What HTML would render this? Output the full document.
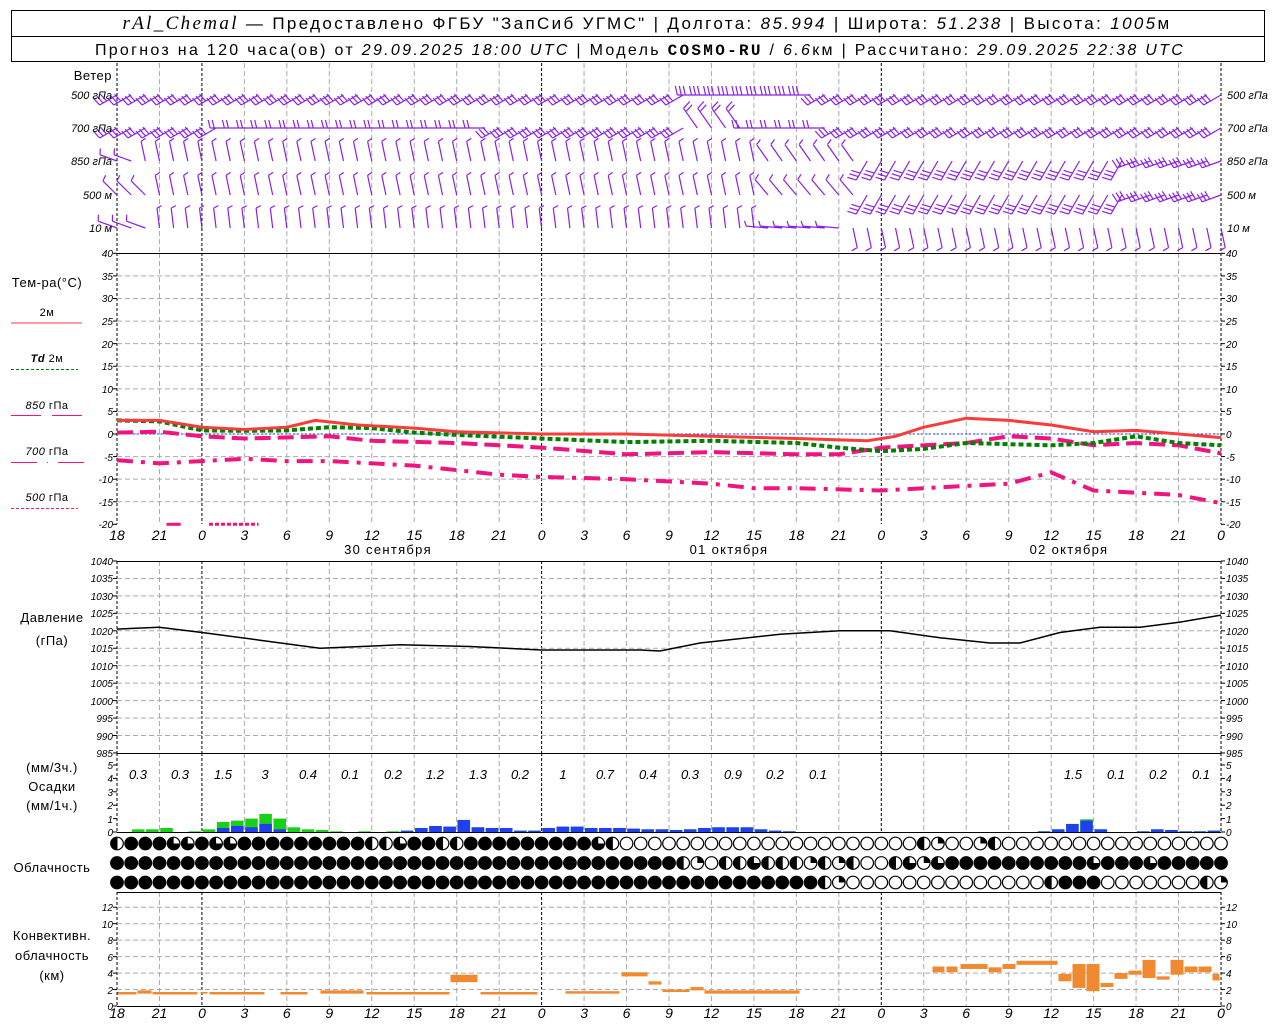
<!DOCTYPE html>
<html><head><meta charset="utf-8"><style>
html,body{margin:0;padding:0;background:#fff;width:1280px;height:1024px;overflow:hidden}
svg{display:block;font-family:"Liberation Sans","DejaVu Sans",sans-serif}
.t{font-size:13px;fill:#000;letter-spacing:0.5px}
.n{font-size:10px;font-style:italic;fill:#000}
.h{font-size:14px;font-style:italic;fill:#000;text-anchor:middle}
.v{font-size:13px;font-style:italic;fill:#000;text-anchor:middle}
.L{text-anchor:end}.M{text-anchor:middle}
.lg{font-size:11px}
</style></head><body>
<svg id="s" width="1280" height="1024" viewBox="0 0 1280 1024" xmlns="http://www.w3.org/2000/svg">
<rect x="11.5" y="10.5" width="1253" height="51" fill="none" stroke="#000"/>
<line x1="11" y1="36.5" x2="1265" y2="36.5" stroke="#000"/>
<text x="647" y="29" class="M" style="font-size:17px;letter-spacing:2.35px"><tspan font-family="Liberation Serif" font-style="italic" font-size="19">rAl_Chemal</tspan> — Предоставлено ФГБУ "ЗапСиб УГМС" | Долгота: <tspan font-style="italic">85.994</tspan> | Широта: <tspan font-style="italic">51.238</tspan> | Высота: <tspan font-style="italic">1005</tspan>м</text>
<text x="640" y="55" class="M" style="font-size:16px;letter-spacing:2.3px">Прогноз на 120 часа(ов) от <tspan font-style="italic">29.09.2025 18:00 UTC</tspan>  | Модель <tspan font-family="Liberation Mono" font-weight="bold">COSMO-RU</tspan> / <tspan font-style="italic">6.6</tspan>км | Рассчитано: <tspan font-style="italic">29.09.2025 22:38 UTC</tspan></text>
<g id="grid"></g>
<g id="gfx"></g>
<text x="112" y="80" class="t L">Ветер</text>
<text x="112" y="99" class="n L" style="font-size:11px">500 гПа</text>
<text x="112" y="132" class="n L" style="font-size:11px">700 гПа</text>
<text x="112" y="165" class="n L" style="font-size:11px">850 гПа</text>
<text x="112" y="199" class="n L" style="font-size:11px">500 м</text>
<text x="112" y="232" class="n L" style="font-size:11px">10  м</text>
<text x="1227" y="99" class="n" style="font-size:11px">500 гПа</text>
<text x="1227" y="132" class="n" style="font-size:11px">700 гПа</text>
<text x="1227" y="165" class="n" style="font-size:11px">850 гПа</text>
<text x="1227" y="199" class="n" style="font-size:11px">500 м</text>
<text x="1227" y="232" class="n" style="font-size:11px">10  м</text>
<text x="47" y="287" class="t M">Тем-ра(°С)</text>
<text x="47" y="316" class="t M lg">2м</text>
<line x1="11" y1="323" x2="82" y2="323" stroke="#f83c3c"/>
<text x="47" y="362" class="t M lg"><tspan font-weight="bold" font-style="italic">Td</tspan>  2м</text>
<line x1="11" y1="369.5" x2="78" y2="369.5" stroke="#008000" stroke-dasharray="3,2"/>
<text x="47" y="409" class="t M lg"><tspan font-style="italic">850</tspan> гПа</text>
<path d="M11 415.5H41M52 415.5H82" stroke="#f0147f"/>
<text x="47" y="455" class="t M lg"><tspan font-style="italic">700</tspan> гПа</text>
<path d="M11 462.5H37M47 462.5H48M58 462.5H84" stroke="#f0147f"/>
<text x="47" y="501" class="t M lg"><tspan font-style="italic">500</tspan> гПа</text>
<line x1="11" y1="508.5" x2="78" y2="508.5" stroke="#f0147f" stroke-dasharray="3,2"/>
<text x="52" y="622" class="t M">Давление</text>
<text x="52" y="645" class="t M">(гПа)</text>
<text x="52" y="772" class="t M">(мм/3ч.)</text>
<text x="52" y="791" class="t M">Осадки</text>
<text x="52" y="810" class="t M">(мм/1ч.)</text>
<text x="52" y="872" class="t M">Облачность</text>
<text x="52" y="940" class="t M">Конвективн.</text>
<text x="52" y="960" class="t M">облачность</text>
<text x="52" y="980" class="t M">(км)</text>
<g class="n L" text-anchor="end">
<text x="113" y="257">40</text><text x="113" y="280">35</text><text x="113" y="302">30</text><text x="113" y="325">25</text><text x="113" y="348">20</text><text x="113" y="370">15</text><text x="113" y="393">10</text><text x="113" y="415">5</text><text x="113" y="438">0</text><text x="113" y="461">-5</text><text x="113" y="483">-10</text><text x="113" y="506">-15</text><text x="113" y="528">-20</text>
<text x="113" y="565">1040</text><text x="113" y="582">1035</text><text x="113" y="600">1030</text><text x="113" y="617">1025</text><text x="113" y="635">1020</text><text x="113" y="652">1015</text><text x="113" y="670">1010</text><text x="113" y="687">1005</text><text x="113" y="705">1000</text><text x="113" y="722">995</text><text x="113" y="740">990</text><text x="113" y="757">985</text>
<text x="113" y="836">0</text><text x="113" y="823">1</text><text x="113" y="809">2</text><text x="113" y="796">3</text><text x="113" y="782">4</text><text x="113" y="769">5</text>
<text x="113" y="1010">0</text><text x="113" y="994">2</text><text x="113" y="977">4</text><text x="113" y="961">6</text><text x="113" y="944">8</text><text x="113" y="928">10</text><text x="113" y="911">12</text>
</g>
<g class="n">
<text x="1226" y="257">40</text><text x="1226" y="280">35</text><text x="1226" y="302">30</text><text x="1226" y="325">25</text><text x="1226" y="348">20</text><text x="1226" y="370">15</text><text x="1226" y="393">10</text><text x="1226" y="415">5</text><text x="1226" y="438">0</text><text x="1226" y="461">-5</text><text x="1226" y="483">-10</text><text x="1226" y="506">-15</text><text x="1226" y="528">-20</text>
<text x="1226" y="565">1040</text><text x="1226" y="582">1035</text><text x="1226" y="600">1030</text><text x="1226" y="617">1025</text><text x="1226" y="635">1020</text><text x="1226" y="652">1015</text><text x="1226" y="670">1010</text><text x="1226" y="687">1005</text><text x="1226" y="705">1000</text><text x="1226" y="722">995</text><text x="1226" y="740">990</text><text x="1226" y="757">985</text>
<text x="1226" y="836">0</text><text x="1226" y="823">1</text><text x="1226" y="809">2</text><text x="1226" y="796">3</text><text x="1226" y="782">4</text><text x="1226" y="769">5</text>
<text x="1226" y="1010">0</text><text x="1226" y="994">2</text><text x="1226" y="977">4</text><text x="1226" y="961">6</text><text x="1226" y="944">8</text><text x="1226" y="928">10</text><text x="1226" y="911">12</text>
</g>
<g class="h">
<text x="117" y="540">18</text><text x="159.5" y="540">21</text><text x="202" y="540">0</text><text x="244.4" y="540">3</text><text x="286.8" y="540">6</text><text x="329.3" y="540">9</text><text x="371.8" y="540">12</text><text x="414.2" y="540">15</text><text x="456.7" y="540">18</text><text x="499.1" y="540">21</text><text x="541.6" y="540">0</text><text x="584.1" y="540">3</text><text x="626.5" y="540">6</text><text x="669" y="540">9</text><text x="711.4" y="540">12</text><text x="753.9" y="540">15</text><text x="796.4" y="540">18</text><text x="838.8" y="540">21</text><text x="881.3" y="540">0</text><text x="923.7" y="540">3</text><text x="966.2" y="540">6</text><text x="1008.7" y="540">9</text><text x="1051.1" y="540">12</text><text x="1093.6" y="540">15</text><text x="1136" y="540">18</text><text x="1178.5" y="540">21</text><text x="1221" y="540">0</text>
<text x="117" y="1018">18</text><text x="159.5" y="1018">21</text><text x="202" y="1018">0</text><text x="244.4" y="1018">3</text><text x="286.8" y="1018">6</text><text x="329.3" y="1018">9</text><text x="371.8" y="1018">12</text><text x="414.2" y="1018">15</text><text x="456.7" y="1018">18</text><text x="499.1" y="1018">21</text><text x="541.6" y="1018">0</text><text x="584.1" y="1018">3</text><text x="626.5" y="1018">6</text><text x="669" y="1018">9</text><text x="711.4" y="1018">12</text><text x="753.9" y="1018">15</text><text x="796.4" y="1018">18</text><text x="838.8" y="1018">21</text><text x="881.3" y="1018">0</text><text x="923.7" y="1018">3</text><text x="966.2" y="1018">6</text><text x="1008.7" y="1018">9</text><text x="1051.1" y="1018">12</text><text x="1093.6" y="1018">15</text><text x="1136" y="1018">18</text><text x="1178.5" y="1018">21</text><text x="1221" y="1018">0</text>
</g>
<g class="t M" style="font-size:13px;letter-spacing:1.3px">
<text x="388" y="554">30 сентября</text><text x="729" y="554">01 октября</text><text x="1069" y="554">02 октября</text>
</g>
<g class="v">
<text x="138" y="779">0.3</text><text x="180" y="779">0.3</text><text x="223" y="779">1.5</text><text x="265" y="779">3</text><text x="308" y="779">0.4</text><text x="350" y="779">0.1</text><text x="393" y="779">0.2</text><text x="435" y="779">1.2</text><text x="478" y="779">1.3</text><text x="520" y="779">0.2</text><text x="563" y="779">1</text><text x="605" y="779">0.7</text><text x="648" y="779">0.4</text><text x="690" y="779">0.3</text><text x="733" y="779">0.9</text><text x="775" y="779">0.2</text><text x="818" y="779">0.1</text>
<text x="1073" y="779">1.5</text><text x="1116" y="779">0.1</text><text x="1158" y="779">0.2</text><text x="1201" y="779">0.1</text>
</g>
</svg>
<script>
(function(){
var NS="http://www.w3.org/2000/svg",G=document.getElementById("grid"),F=document.getElementById("gfx");
function el(p,n,a){var e=document.createElementNS(NS,n);for(var k in a)e.setAttribute(k,a[k]);p.appendChild(e);return e;}
var X0=117,PH=1104/78;function hx(h){return X0+h*PH;}
var panels=[[63,253],[253,524],[561,753],[753,832],[892,1006]];
panels.forEach(function(p){
 for(var j=0;j<=26;j++){var x=hx(j*3),day=(j%8==2)||j==0||j==26;
  el(G,"line",{x1:x,y1:p[0],x2:x,y2:p[1],stroke:day?"#000":"#aaa","stroke-dasharray":day?"3,2":"5,3","stroke-width":1});}
});
function hl(y){el(G,"line",{x1:X0,y1:y,x2:1221,y2:y,stroke:"#aaa","stroke-dasharray":"5,3"});}
for(var v=35;v>=-15;v-=5)hl(434-v*4.517);
for(var p=1035;p>=990;p-=5)hl(561+(1040-p)*3.49);
for(var k=2;k<=12;k+=2)hl(1006-k*8.23);
[253,561,753,832,892,1006].forEach(function(y){el(G,"line",{x1:X0,y1:y+.5,x2:1221,y2:y+.5,stroke:"#000"});});
function tk(y){el(G,"line",{x1:113,y1:y,x2:117,y2:y,stroke:"#000"});el(G,"line",{x1:1221,y1:y,x2:1225,y2:y,stroke:"#000"});}
for(var v=40;v>=-20;v-=5)tk(434-v*4.517);
for(var p=1040;p>=985;p-=5)tk(561+(1040-p)*3.49);
for(var m=0;m<=5;m++)tk(832-m*13.4);
for(var k=0;k<=12;k+=2)tk(1006-k*8.23);
function curve(pts,ty,st){var d="";pts.forEach(function(q,i){d+=(i?"L":"M")+hx(q[0]).toFixed(1)+" "+ty(q[1]).toFixed(1);});var a={d:d,fill:"none"};for(var k in st)a[k]=st[k];el(F,"path",a);}
function T(v){return 434-v*4.517;}
el(F,"line",{x1:X0,y1:434,x2:1221,y2:434,stroke:"#2040ff","stroke-dasharray":"2,2"});
curve([[0,0.3],[3,0.5],[6,-0.5],[9,-1],[15,-0.5],[18,-1.5],[24,-2],[27,-2.5],[30,-3],[36,-4.5],[42,-4],[48,-4.5],[51,-4.5],[54,-3],[60,-2],[63,-0.5],[66,-1],[69,-2.5],[72,-2],[75,-2.5],[78,-4.3]],T,{stroke:"#f0147f","stroke-width":4,"stroke-dasharray":"16,7"});
curve([[0,-5.8],[3,-6.5],[6,-6],[9,-5.5],[12,-6],[15,-6],[21,-7],[24,-8],[27,-9],[30,-9.5],[36,-10],[42,-11],[45,-12],[48,-12],[54,-12.5],[60,-11.5],[63,-11],[66,-8.5],[69,-12.5],[72,-13],[75,-13.5],[78,-15.3]],T,{stroke:"#f0147f","stroke-width":4,"stroke-dasharray":"16,8,4,8"});
curve([[3.5,-20],[4.5,-20]],T,{stroke:"#f0147f","stroke-width":3});
curve([[6.5,-20],[10,-20]],T,{stroke:"#f0147f","stroke-width":3,"stroke-dasharray":"4,2"});
curve([[0,3],[3,2.8],[6,0.8],[9,0.7],[12,0.8],[15,1.5],[18,1.3],[21,0.3],[24,-0.2],[30,-1],[36,-1.8],[42,-1.5],[48,-2],[51,-3],[54,-3.8],[57,-3.3],[60,-2],[66,-2.5],[69,-2],[72,-0.5],[75,-2],[78,-2.5]],T,{stroke:"#008000","stroke-width":4,"stroke-dasharray":"5,3"});
curve([[0,3],[3,3],[6,1.5],[9,1],[12,1.5],[14,3],[17,2],[21,1.3],[24,0.5],[30,0],[36,0],[42,-0.5],[48,-1],[51,-1.3],[53,-1.5],[55,-0.5],[57,1.5],[60,3.5],[63,3],[66,2],[69,0.5],[72,0.8],[75,0],[78,-0.8]],T,{stroke:"#f83c3c","stroke-width":3});
var pp=[[117,1020.5],[159,1021],[202,1019.5],[260,1017.3],[320,1015],[400,1016],[470,1015.5],[541,1014.5],[640,1014.5],[660,1014.2],[700,1016.5],[780,1019],[840,1020],[890,1020],[940,1018],[990,1016.5],[1020,1016.5],[1060,1019.5],[1100,1021],[1140,1021],[1180,1022.5],[1221,1024.5]];
var d="";pp.forEach(function(q,i){d+=(i?"L":"M")+q[0]+" "+(561+(1040-q[1])*3.49).toFixed(1);});
el(F,"path",{d:d,fill:"none",stroke:"#000","stroke-width":1.5});
var pr=[[1,.2,0],[2,.2,0],[3,.3,0],[5,.05,0],[6,.2,0],[7,.75,.3],[8,.85,.45],[9,1,.35],[10,1.35,.6],[11,1,.2],[12,.35,0],[13,.2,0],[14,.15,0],[15,.05,0],[17,.05,0],[19,.05,0],[20,.1,.1],[21,.3,.3],[22,.45,.45],[23,.4,.4],[24,.9,.9],[25,.35,.35],[26,.3,.3],[27,.3,.3],[28,.1,.1],[29,.1,.1],[30,.3,.3],[31,.4,.4],[32,.4,.4],[33,.3,.3],[34,.3,.3],[35,.3,.3],[36,.25,.25],[37,.2,.2],[38,.2,.2],[39,.15,.15],[40,.2,.2],[41,.3,.3],[42,.35,.35],[43,.35,.35],[44,.35,.35],[45,.2,.2],[46,.1,.1],[47,.05,.05],[65,.05,.05],[66,.2,.2],[67,.6,.6],[68,.95,.85],[69,.2,.2],[72,.05,.05],[73,.2,.2],[74,.15,.15],[75,.05,.05],[76,.05,.05],[77,.1,.1]];
pr.forEach(function(b){var x=hx(b[0])+0.8,w=PH-1.6;
 el(F,"rect",{x:x,y:832-b[1]*13.4,width:w,height:b[1]*13.4,fill:"#18d018"});
 if(b[2]>0)el(F,"rect",{x:x,y:832-b[2]*13.4,width:w,height:b[2]*13.4,fill:"#2040f0"});});
var rows=[
"HFFFTTFTTFFFFFFFFFHHTFFHHFFFFFFFFFTHEEEEEEEEEEEEEEEEEEEEEHQEEQHEEEEEEEEEEEEEEEE",
"FFFFFFFFFFFFFFFFFFFFFFFFFFFFFFFFFFFFFFFFHQEHHTHHHQHQHEEHTQTFFFFFFFFFFTFFFTFFFFF",
"FFFFFFFFFFFFFFFFFFFFFFFFFFFFFFFFFFFFFFFFFFFFFFFFFFHQEEEEEEEEEEEEEEHFFFEEEEEEEHQ"];
var cy=[843.5,863,882.5],r=6.3;
rows.forEach(function(s,ri){for(var i=0;i<79;i++){var c=s[i]||"E",x=hx(i),y=cy[ri];
 el(F,"circle",{cx:x,cy:y,r:r,fill:c=="F"?"#000":"#fff",stroke:"#000","stroke-width":1.2});
 if(c=="H"){el(F,"path",{d:"M"+x+" "+(y-r)+"A"+r+" "+r+" 0 0 0 "+x+" "+(y+r)+"Z",fill:"#000"});el(F,"line",{x1:x,y1:y-r,x2:x,y2:y+r,stroke:"#000"});}
 if(c=="Q")el(F,"path",{d:"M"+x+" "+y+"L"+x+" "+(y-r)+"A"+r+" "+r+" 0 0 1 "+(x+r)+" "+y+"Z",fill:"#000"});
 if(c=="T")el(F,"path",{d:"M"+x+" "+y+"L"+(x+r)+" "+y+"A"+r+" "+r+" 0 1 1 "+x+" "+(y-r)+"Z",fill:"#000"});
}});
var cv=[[117,137,1.4,1.7],[137,152,1.5,1.9],[152,198,1.4,1.7],[200,208,1.5,1.7],[209,265,1.4,1.7],[280,308,1.4,1.7],[320,364,1.5,1.9],[366,450,1.4,1.7],[450,478,2.9,3.8],[480,538,1.4,1.7],[565,620,1.5,1.8],[621,648,3.6,4.1],[648,662,2.6,3.0],[662,690,1.7,2.0],[690,704,1.9,2.3],[704,800,1.5,1.9],
[932,945,4.1,4.8],[946,958,4.1,4.8],[960,988,4.5,5.1],[988,1002,4.1,4.7],[1002,1016,4.5,5.1],[1016,1058,5.0,5.5],[1058,1072,3.0,3.9],[1072,1086,2.2,5.1],[1086,1100,1.8,5.1],[1100,1114,2.3,2.8],[1114,1128,3.3,4.0],[1128,1142,3.8,4.3],[1142,1156,3.4,5.6],[1156,1170,3.2,3.6],[1170,1184,3.8,5.6],[1184,1198,4.1,4.8],[1198,1212,4.1,4.8],[1212,1220,3.1,3.9]];
cv.forEach(function(b){el(F,"rect",{x:b[0]+0.5,y:1006-b[3]*8.23,width:b[1]-b[0]-1,height:(b[3]-b[2])*8.23,fill:"#f08a30"});});
var lv=[[95,[[0,41,150,3,20,9],[41,50,180,3,20,9],[50,79,150,3,20,9]]],
 [128,[[0,8,150,3,20,9],[8,27,180,2,20,8],[27,41,150,3,20,9],[41,45,235,2,24,9],[45,51,180,2,20,8],[51,79,150,3,20,9]]],
 [161,[[0,2,200,1,18,6],[2,46,258,1,20,5],[46,53,235,1,20,6],[53,72,120,3,22,9],[72,79,160,3,20,9]]],
 [195,[[0,3,225,1,20,6],[3,46,258,1,20,5],[46,53,230,1,20,6],[53,72,120,3,22,9],[72,79,160,3,20,9]]],
 [228,[[0,3,200,1,20,6],[3,46,263,1,20,5],[46,52,185,1,22,5],[52,79,78,1,20,6]]]];
var d2="";
lv.forEach(function(L){var y=L[0];L[1].forEach(function(sg){for(var h=sg[0];h<sg[1]&&h<79;h++){
 var x=hx(h),a=sg[2]*Math.PI/180,len=sg[4],ex=x+len*Math.cos(a),ey=y+len*Math.sin(a);
 d2+="M"+x.toFixed(1)+" "+y+"L"+ex.toFixed(1)+" "+ey.toFixed(1);
 var b=a+Math.PI/2,fl=sg[5];
 for(var f=0;f<sg[3];f++){var fx=ex-4*f*Math.cos(a),fy=ey-4*f*Math.sin(a);
  d2+="M"+fx.toFixed(1)+" "+fy.toFixed(1)+"L"+(fx+fl*Math.cos(b)+2*Math.cos(a)).toFixed(1)+" "+(fy+fl*Math.sin(b)+2*Math.sin(a)).toFixed(1);}
 }});});
el(F,"path",{d:d2,fill:"none",stroke:"#8a20e8","stroke-width":1.2});
})();
</script>
</body></html>
